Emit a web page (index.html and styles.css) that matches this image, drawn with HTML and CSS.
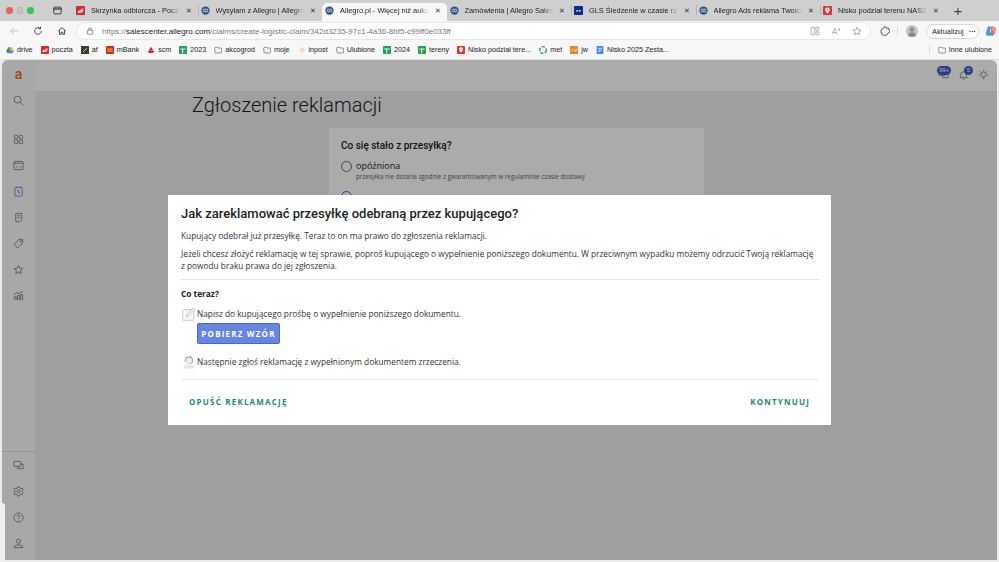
FILE: index.html
```html
<!DOCTYPE html>
<html lang="pl">
<head>
    <meta charset="UTF-8">
    <meta name="viewport" content="width=device-width, initial-scale=1.0">
    <title>Zgłoszenie reklamacji</title>
    <link rel="stylesheet" href="styles.css">
</head>
<body>
    <svg class="defs" width="0" height="0">
        <symbol id="fav-allegro" viewBox="0 0 12 12">
            <circle cx="6" cy="6" r="5.5" fill="#2f5180"/>
            <path d="M3 4.5h6v3H3z" fill="none" stroke="#c5d3e6" stroke-width="1"/>
            <path d="M4 3l4 6M8 3L4 9" stroke="#9fb4d0" stroke-width=".7"/>
        </symbol>
        <symbol id="fav-mail" viewBox="0 0 12 12">
            <rect width="12" height="12" rx="1" fill="#e0252b"/>
            <path d="M2 7l8-4-1 5-6 1.500z" fill="#fff"/>
            <path d="M2 5l4 2 4-3" fill="none" stroke="#e0252b" stroke-width=".8"/>
        </symbol>
        <symbol id="fav-sheet" viewBox="0 0 12 12">
            <rect width="12" height="12" rx="1" fill="#1fa351"/>
            <path d="M2 4.500h8M5.500 4.500V11" stroke="#fff" stroke-width="1.400"/>
        </symbol>
        <symbol id="fav-folder" viewBox="0 0 12 12">
            <path d="M1 3.500q0-1.500 1.500-1.500h2.500l1 1h4q1.500 0 1.500 1.500v4.500q0 1.500-1.500 1.500h-7q-1.500 0-1.500-1.500z" fill="none" stroke="#444" stroke-width=".9"/>
        </symbol>
        <symbol id="fav-pin" viewBox="0 0 12 12">
            <rect width="12" height="12" rx="1" fill="#e0352f"/>
            <path d="M6 2a3 3 0 0 1 3 3c0 2-3 5-3 5S3 7 3 5a3 3 0 0 1 3-3z" fill="#fff"/>
            <circle cx="6" cy="5" r="1" fill="#e0352f"/>
        </symbol>
    </svg>

    <div class="tabstrip">
        <div class="lights">
            <span class="light light-red"></span>
            <span class="light light-grey"></span>
            <span class="light light-green"></span>
        </div>
        <svg class="win-icon" viewBox="0 0 12 12"><rect x="1" y="1.500" width="10" height="9" rx="1.500" fill="none" stroke="#222" stroke-width="1.100"/><path d="M1 4h10" stroke="#222" stroke-width="1.500"/></svg>
        <div class="tab">
            <svg class="fav"><use href="#fav-mail"/></svg>
            <span class="tab-title">Skrzynka odbiorcza - Poczta - Allegro</span>
            <span class="tab-close">✕</span>
        </div>
        <div class="tab">
            <svg class="fav"><use href="#fav-allegro"/></svg>
            <span class="tab-title">Wysyłam z Allegro | Allegro Sales Center</span>
            <span class="tab-close">✕</span>
        </div>
        <div class="tab tab-active">
            <svg class="fav"><use href="#fav-allegro"/></svg>
            <span class="tab-title">Allegro.pl - Więcej niż aukcje. Najlepsze</span>
            <span class="tab-close">✕</span>
        </div>
        <div class="tab">
            <svg class="fav"><use href="#fav-allegro"/></svg>
            <span class="tab-title">Zamówienia | Allegro Sales Center - panel</span>
            <span class="tab-close">✕</span>
        </div>
        <div class="tab">
            <svg class="fav" viewBox="0 0 12 12"><rect width="12" height="12" rx="1" fill="#0b2a8f"/><path d="M3 6.500h2.500M6.500 6.500H9" stroke="#fff" stroke-width="1.500"/></svg>
            <span class="tab-title">GLS Śledzenie w czasie rzeczywistym</span>
            <span class="tab-close">✕</span>
        </div>
        <div class="tab">
            <svg class="fav"><use href="#fav-allegro"/></svg>
            <span class="tab-title">Allegro Ads reklama Twoich ofert na</span>
            <span class="tab-close">✕</span>
        </div>
        <div class="tab">
            <svg class="fav"><use href="#fav-pin"/></svg>
            <span class="tab-title">Nisko podział terenu NASZ – Moje Mapy</span>
            <span class="tab-close">✕</span>
        </div>
        <span class="new-tab">+</span>
    </div>

    <div class="toolbar">
        <div class="nav-buttons">
            <svg class="tool-icon" viewBox="0 0 12 12"><path d="M11 6H2M6 2L2 6l4 4" fill="none" stroke="#bbb" stroke-width="1"/></svg>
            <svg class="tool-icon" viewBox="0 0 12 12"><path d="M10 6a4 4 0 1 1-1.300-3M9 .8V3.300H6.500" fill="none" stroke="#333" stroke-width="1"/></svg>
            <svg class="tool-icon" viewBox="0 0 12 12"><path d="M1.500 6L6 2l4.500 4M3 5v5h2V7.500h2V10h2V5" fill="none" stroke="#333" stroke-width="1"/></svg>
        </div>
        <div class="address">
            <svg class="lock" viewBox="0 0 10 10"><rect x="1.500" y="4" width="7" height="5" rx="1" fill="none" stroke="#555" stroke-width=".8"/><path d="M3.200 4V2.800a1.800 1.800 0 0 1 3.600 0V4" fill="none" stroke="#555" stroke-width=".8"/></svg>
            <span class="url">https://<b>salescenter.allegro.com</b>/claims/create-logistic-claim/342d3235-97c1-4a36-8bf5-c99ff0e033ff</span>
            <div class="address-icons">
                <svg class="tool-icon" viewBox="0 0 12 12"><path d="M1.500 1.500h3.500v9H1.500zM7 1.500h3.500v3.500H7zM7 7h3.500v3.500H7z" fill="none" stroke="#999" stroke-width=".9"/></svg>
                <svg class="tool-icon" viewBox="0 0 12 12"><path d="M1.500 10L4.500 2.500 7.500 10M2.500 7.800h4M8.500 2.500l1.200 3 1-2.200" fill="none" stroke="#999" stroke-width=".9"/></svg>
                <svg class="tool-icon" viewBox="0 0 12 12"><path d="M6 1.500l1.400 3 3.300.400-2.400 2.200.6 3.300L6 8.800l-2.900 1.600.6-3.300-2.400-2.200 3.300-.400z" fill="none" stroke="#888" stroke-width=".9"/></svg>
            </div>
        </div>
        <svg class="tool-icon ext" viewBox="0 0 12 12"><path d="M10 4V2.500H7.500a1.500 1.500 0 0 0-3 0A4.500 4.500 0 1 0 10 8a1.500 1.500 0 0 0 0-4z" fill="none" stroke="#333" stroke-width="1"/></svg>
        <span class="tool-sep"></span>
        <svg class="avatar" viewBox="0 0 12 12"><circle cx="6" cy="6" r="6" fill="#c4c4c4"/><circle cx="6" cy="4.500" r="2.200" fill="#8a8a8a"/><path d="M2 11c.5-3 2-3.800 4-3.800s3.500.800 4 3.800q-4 2-8 0z" fill="#8a8a8a"/></svg>
        <div class="update-pill">Aktualizuj <span class="dots">···</span></div>
        <svg class="copilot" viewBox="0 0 12 12"><path d="M3 1.500h3L5 6 4 10.500H2.500Q.5 10 1 7.500z" fill="#3b9be8"/><path d="M6 1.500h3q2 .5 2 3L9.500 9 8 10.500H4.500L6 6z" fill="#e85fa8"/><path d="M8 1.500l2.500 2L9 7 7 4z" fill="#f4b13d"/><path d="M2 10.500l3-4 3 4z" fill="#35b36c"/></svg>
    </div>

    <div class="bookmarks">
        <div class="bm"><svg class="fav fav-small" viewBox="0 0 12 12"><path d="M4 1.500h4l3.500 6-2 3.500h-7L.5 7.500z" fill="#4285f4"/><path d="M4 1.500h4l3.500 6h-4z" fill="#fbbc05"/><path d="M.5 7.500L4 1.500l2 3.500-3.500 6z" fill="#1fa351"/></svg>drive</div>
        <div class="bm"><svg class="fav fav-small"><use href="#fav-mail"/></svg>poczta</div>
        <div class="bm"><svg class="fav fav-small" viewBox="0 0 12 12"><rect width="12" height="12" fill="#3c3c34"/><path d="M3 9L9 3" stroke="#c6c86a" stroke-width="1.500"/></svg>af</div>
        <div class="bm"><svg class="fav fav-small" viewBox="0 0 12 12"><rect width="12" height="12" rx="1" fill="#cc2c22"/><path d="M3 9V4h2v5M7 9V4h2v5" stroke="#f4c430" fill="none"/></svg>mBank</div>
        <div class="bm"><svg class="fav fav-small" viewBox="0 0 12 12"><path d="M6 1L2.500 7h7zM1 7.500h10L9 10.500H3z" fill="#d9232d"/></svg>scm</div>
        <div class="bm"><svg class="fav fav-small"><use href="#fav-sheet"/></svg>2023</div>
        <div class="bm"><svg class="fav fav-small"><use href="#fav-folder"/></svg>akcogrod</div>
        <div class="bm"><svg class="fav fav-small"><use href="#fav-folder"/></svg>moje</div>
        <div class="bm"><svg class="fav fav-small" viewBox="0 0 12 12"><path d="M6 1v10M1.500 6h9M3 3l6 6M9 3l-6 6" stroke="#f3d36a" stroke-width="1"/></svg>inpost</div>
        <div class="bm"><svg class="fav fav-small"><use href="#fav-folder"/></svg>Ulubione</div>
        <div class="bm"><svg class="fav fav-small"><use href="#fav-sheet"/></svg>2024</div>
        <div class="bm"><svg class="fav fav-small"><use href="#fav-sheet"/></svg>tereny</div>
        <div class="bm"><svg class="fav fav-small"><use href="#fav-pin"/></svg>Nisko podział tere...</div>
        <div class="bm"><svg class="fav fav-small" viewBox="0 0 12 12"><circle cx="6" cy="6" r="5" fill="none" stroke="#2f8f7d" stroke-width="2" stroke-dasharray="5 2"/></svg>met</div>
        <div class="bm"><svg class="fav fav-small" viewBox="0 0 12 12"><rect width="12" height="12" fill="#e8872c"/><path d="M3 4v4M6 4l1 4 1-2 1 2 1-4" stroke="#fff" fill="none" stroke-width=".7"/></svg>jw</div>
        <div class="bm"><svg class="fav fav-small" viewBox="0 0 12 12"><rect x="1" width="10" height="12" rx="1" fill="#4285f4"/><path d="M3 3.500h6M3 6h6M3 8.500h4" stroke="#fff"/></svg>Nisko 2025 Zesta...</div>
        <div class="bm bm-other"><svg class="fav fav-small"><use href="#fav-folder"/></svg>Inne ulubione</div>
    </div>

    <div class="window">
        <aside class="sidebar">
            <div class="side-top">
                <div class="side-cell side-logo">a</div>
                <div class="side-cell"><svg class="side-icon" viewBox="0 0 12 12"><circle cx="5" cy="5" r="3.800"/><path d="M8 8l3.200 3.200"/></svg></div>
                <div class="side-cell side-gap"><svg class="side-icon" viewBox="0 0 12 12"><rect x="1.500" y="1.500" width="3.800" height="3.800" rx="1"/><rect x="6.700" y="1.500" width="3.800" height="3.800" rx="1"/><rect x="1.500" y="6.700" width="3.800" height="3.800" rx="1"/><rect x="6.700" y="6.700" width="3.800" height="3.800" rx="1"/></svg></div>
                <div class="side-cell"><svg class="side-icon" viewBox="0 0 12 12"><rect x="1" y="1.500" width="10" height="9" rx="1"/><path d="M1 3.500h10M3 7.500h2M7 7.500h2"/></svg></div>
                <div class="side-cell"><svg class="side-icon side-icon-on" viewBox="0 0 12 12"><rect x="2" y="1.500" width="8" height="9.500" rx=".8"/><path d="M4 .8v1.500M8 .8v1.500M4.500 5h1.500v2.500h1.500"/></svg></div>
                <div class="side-cell"><svg class="side-icon" viewBox="0 0 12 12"><path d="M3 1.500h6.500v7L7.500 10.500H3zM5 4h2.500M5 6h2.500"/></svg></div>
                <div class="side-cell"><svg class="side-icon" viewBox="0 0 12 12"><path d="M6.500 1.500h4v4l-5.500 5.500-4-4z"/><circle cx="8.500" cy="3.500" r=".7"/></svg></div>
                <div class="side-cell"><svg class="side-icon" viewBox="0 0 12 12"><path d="M6 1.500l1.400 3 3.300.400-2.400 2.200.6 3.300L6 8.800l-2.900 1.600.6-3.300-2.400-2.200 3.300-.400z"/></svg></div>
                <div class="side-cell"><svg class="side-icon" viewBox="0 0 12 12"><path d="M1.500 11V7.500h2V11M5 11V6h2v5M8.500 11V5h2v6M1 5l3-2 2.500 1L10.500 1.500"/></svg></div>
            </div>
            <div class="side-bottom">
                <div class="side-cell"><svg class="side-icon" viewBox="0 0 12 12"><rect x="1" y="1.500" width="7.500" height="5.500" rx=".8"/><path d="M8.500 4.500h2.500v5H5V7"/></svg></div>
                <div class="side-cell"><svg class="side-icon" viewBox="0 0 12 12"><path d="M5 1h2l.4 1.500 1.400.6 1.300-.7 1 1.700-1.100 1 .1 1.500 1 1-1 1.700-1.400-.5-1.200.8L7 11H5l-.4-1.400-1.300-.7-1.400.5-1-1.700 1.100-1V5.200l-1.100-1 1-1.700 1.400.6 1.200-.7z"/><circle cx="6" cy="6" r="1.600"/></svg></div>
                <div class="side-cell"><svg class="side-icon" viewBox="0 0 12 12"><circle cx="6" cy="6" r="5"/><path d="M4.500 4.800a1.500 1.500 0 1 1 2.200 1.300c-.5.300-.7.600-.7 1.100M6 8.500v.6"/></svg></div>
                <div class="side-cell"><svg class="side-icon" viewBox="0 0 12 12"><circle cx="6" cy="3.500" r="2.200"/><path d="M1.500 10.500v-1.500l3-1.500h3l3 1.500v1.500z"/></svg></div>
            </div>
        </aside>

        <div class="main">
            <header class="topbar">
                <div class="top-icon">
                    <svg class="side-icon" viewBox="0 0 12 12"><rect x="1" y="1.500" width="7.500" height="5.500" rx=".8"/><path d="M8.500 4.500h2.500v5H5V7"/></svg>
                    <span class="badge badge-wide">99+</span>
                </div>
                <div class="top-icon">
                    <svg class="side-icon" viewBox="0 0 12 12"><path d="M2 9.500c1-1 1-2 1-3.500a3 3 0 0 1 6 0c0 1.500 0 2.500 1 3.500zM5 11h2"/></svg>
                    <span class="badge">5</span>
                </div>
                <div class="top-icon">
                    <svg class="side-icon" viewBox="0 0 12 12"><circle cx="6" cy="6" r="2.800"/><path d="M6 .8v1.200M1.500 2.500l1 1M10.500 2.500l-1 1M.8 6.500H2M10 6.500h1.200M5 10.500h2"/></svg>
                </div>
            </header>
            <h1 class="page-title">Zgłoszenie reklamacji</h1>
            <section class="claim-panel">
                <h2 class="claim-heading">Co się stało z przesyłką?</h2>
                <div class="claim-option">
                    <span class="radio"></span>
                    <div>
                        <div class="option-label">opóźniona</div>
                        <div class="option-hint">przesyłka nie dotarła zgodnie z gwarantowanym w regulaminie czasie dostawy</div>
                    </div>
                </div>
                <div class="claim-option">
                    <span class="radio radio-on"></span>
                </div>
            </section>
        </div>

        <div class="overlay">
            <div class="modal">
                <h2 class="modal-title">Jak zareklamować przesyłkę odebraną przez kupującego?</h2>
                <p class="modal-text">Kupujący odebrał już przesyłkę. Teraz to on ma prawo do zgłoszenia reklamacji.</p>
                <p class="modal-text">Jeżeli chcesz złożyć reklamację w tej sprawie, poproś kupującego o wypełnienie poniższego dokumentu. W przeciwnym wypadku możemy odrzucić Twoją reklamację z powodu braku prawa do jej zgłoszenia.</p>
                <hr class="modal-line">
                <h3 class="modal-sub">Co teraz?</h3>
                <div class="step">
                    <svg class="step-icon" viewBox="0 0 14 14"><path d="M10 2.500H1.500q-.8 0-.8.8v9.500q0 .6.8.6h9.500q.8 0 .8-.8V5" fill="#f4f6f7" stroke="#b5bcc2" stroke-width=".7"/><path d="M4.500 9.500l.6-2L11.500 1l1.500 1.500-6.500 6.400z" fill="#fff" stroke="#9aa3aa" stroke-width=".7"/></svg>
                    <span>Napisz do kupującego prośbę o wypełnienie poniższego dokumentu.</span>
                </div>
                <a class="download-btn">POBIERZ WZÓR</a>
                <div class="step step-second">
                    <svg class="step-icon step-icon-person" viewBox="0 0 15 15"><path d="M1 14.500c.3-3 2-3.800 4-4.300h5c2 .5 3.700 1.300 4 4.300z" fill="#e3e9ee"/><circle cx="7.500" cy="5.500" r="3.600" fill="#f2efe9" stroke="#a9b7c4" stroke-width=".5"/><path d="M3.500 6a4 4 0 0 1 8 0" fill="none" stroke="#8aa5c0" stroke-width="1.100"/><path d="M3.500 5.500v2M11.500 5.500v2M11.500 7.500q0 1.500-2.500 1.800" fill="none" stroke="#6f8fb0" stroke-width=".7"/></svg>
                    <span>Następnie zgłoś reklamację z wypełnionym dokumentem zrzeczenia.</span>
                </div>
                <hr class="modal-line modal-line-low">
                <div class="modal-actions">
                    <a class="link-btn">OPUŚĆ REKLAMACJĘ</a>
                    <a class="link-btn">KONTYNUUJ</a>
                </div>
            </div>
        </div>
    </div>
    <div class="corner-tab"></div>
</body>
</html>
```

FILE: styles.css
```css
html, body {
    height: 100%;
}
body {
    margin: 0;
    width: 999px;
    height: 562px;
    overflow: hidden;
    display: flex;
    flex-direction: column;
    position: relative;
    background-color: #ececec;
    font-family: "Liberation Sans", Arial, sans-serif;
    color: #222;
}
.defs {
    position: absolute;
}

/* browser chrome */
.tabstrip {
    height: 21px;
    display: flex;
    align-items: center;
    background-color: #cfcfcf;
    flex-shrink: 0;
}
.lights {
    display: flex;
    gap: 4px;
    margin-left: 6px;
}
.light {
    width: 6.500px;
    height: 6.500px;
    border-radius: 50%;
}
.light-red {
    background-color: #ee5f57;
}
.light-grey {
    background-color: #c4c4c4;
    box-shadow: inset 0 0 0 .5px #aaa;
}
.light-green {
    background-color: #36c84a;
}
.win-icon {
    width: 9px;
    height: 9px;
    margin-left: 19.500px;
    margin-right: 11px;
}
.tab {
    width: 124.500px;
    height: 18px;
    margin-top: 3px;
    box-sizing: border-box;
    padding: 0 5px 3px 3px;
    display: flex;
    align-items: center;
    gap: 6px;
    font-size: 7.400px;
    border-right: 1px solid transparent;
}
.tab:first-of-type {
    border-left: 1px solid #b5b5b5;
}
.tab + .tab {
    background-image: linear-gradient(#b5b5b5, #b5b5b5);
    background-size: 1px 10px;
    background-position: 0 2px;
    background-repeat: no-repeat;
}
.tab-active {
    background: #f7f7f7 !important;
    border-radius: 5px 5px 0 0;
}
.tab-active + .tab {
    background: none;
}
.fav {
    width: 9px;
    height: 9px;
    flex-shrink: 0;
}
.tab-title {
    flex: 1;
    white-space: nowrap;
    overflow: hidden;
    -webkit-mask-image: linear-gradient(to right, #000 88%, transparent);
    mask-image: linear-gradient(to right, #000 88%, transparent);
}
.tab-close {
    font-size: 7px;
    color: #333;
}
.new-tab {
    font-size: 15px;
    line-height: 1;
    font-weight: 300;
    color: #444;
    margin-left: 9px;
}

.toolbar {
    height: 20px;
    display: flex;
    align-items: center;
    background-color: #f7f7f7;
    flex-shrink: 0;
}
.nav-buttons {
    display: flex;
    gap: 14px;
    margin-left: 9px;
}
.tool-icon {
    width: 10px;
    height: 10px;
    flex-shrink: 0;
}
.address {
    width: 793px;
    height: 16px;
    box-sizing: border-box;
    margin-left: 10px;
    padding: 0 8px 0 9px;
    display: flex;
    align-items: center;
    background-color: #fff;
    border-radius: 9px;
    box-shadow: 0 0 0 1px #e6e6e6;
}
.lock {
    width: 8px;
    height: 8px;
}
.url {
    margin-left: 8px;
    font-size: 8px;
    color: #777;
    white-space: nowrap;
}
.url b {
    font-weight: normal;
    color: #222;
}
.address-icons {
    margin-left: auto;
    display: flex;
    gap: 11px;
}
.ext {
    margin-left: 10px;
}
.tool-sep {
    width: 1px;
    height: 10px;
    margin-left: 7px;
    background-color: #ddd;
}
.avatar {
    width: 12px;
    height: 12px;
    margin-left: 8px;
}
.update-pill {
    width: 53px;
    height: 15px;
    box-sizing: border-box;
    margin-left: 8px;
    padding-left: 5px;
    font-size: 7.400px;
    line-height: 13px;
    background-color: #fff;
    border: 1px solid #d8d8d8;
    border-radius: 8px;
    white-space: nowrap;
}
.dots {
    margin-left: 3px;
    font-weight: bold;
}
.copilot {
    width: 12px;
    height: 12px;
    margin-left: 6px;
}

.bookmarks {
    height: 19px;
    box-sizing: border-box;
    padding: 0 7px 1px 6px;
    display: flex;
    align-items: center;
    gap: 8px;
    background-color: #f7f7f7;
    border-bottom: 1px solid #dedede;
    font-size: 7.200px;
    flex-shrink: 0;
}
.bm {
    display: flex;
    align-items: center;
    gap: 3px;
    white-space: nowrap;
}
.fav-small {
    width: 8px;
    height: 8px;
}
.bm-other {
    margin-left: auto;
    padding-left: 8px;
    border-left: 1px solid #ddd;
}

/* page behind the dialog */
.window {
    position: relative;
    flex: 1;
    margin: 0 2px 2px;
    display: flex;
    background-color: #eee;
    border-radius: 6px 6px 0 0;
    overflow: hidden;
}
.sidebar {
    width: 33px;
    display: flex;
    flex-direction: column;
    justify-content: space-between;
    background-color: #fbfbfb;
    flex-shrink: 0;
}
.side-top {
    padding-top: 1px;
}
.side-bottom {
    padding-bottom: 4px;
    border-top: 1px solid #ddd;
}
.side-cell {
    height: 26px;
    display: flex;
    align-items: center;
    justify-content: center;
}
.side-gap {
    margin-top: 13px;
}
.side-logo {
    font-family: Roboto, sans-serif;
    font-size: 14px;
    font-weight: 500;
    color: #ff5a00;
}
.side-icon {
    width: 11px;
    height: 11px;
    fill: none;
    stroke: #666;
    stroke-width: .8;
}
.side-icon-on {
    stroke: #4a66d0;
}
.main {
    flex: 1;
    min-width: 0;
}
.topbar {
    height: 31px;
    box-sizing: border-box;
    padding: 7px 8px 0 0;
    display: flex;
    justify-content: flex-end;
    gap: 8px;
    background-color: #fff;
}
.top-icon {
    position: relative;
    width: 12px;
    height: 14px;
    display: flex;
    align-items: center;
    justify-content: center;
}
.badge {
    position: absolute;
    top: -1px;
    right: -4px;
    min-width: 9px;
    height: 9px;
    border-radius: 5px;
    font-size: 6px;
    line-height: 9px;
    text-align: center;
    color: #fff;
    background-color: #3d5dc9;
}
.badge-wide {
    width: 14px;
    right: -2px;
}
.page-title {
    margin: 2px 0 0 157px;
    font-family: Roboto, sans-serif;
    font-size: 20px;
    font-weight: 300;
    line-height: 24px;
    color: #222;
}
.claim-panel {
    width: 375px;
    height: 90px;
    box-sizing: border-box;
    margin: 11px 0 0 294px;
    padding: 12px;
    background-color: #fff;
}
.claim-heading {
    margin: 0 0 8px;
    font-family: Roboto, sans-serif;
    font-size: 10px;
    line-height: 12px;
    font-weight: 500;
}
.claim-option {
    display: flex;
    gap: 4px;
    margin-bottom: 8px;
}
.radio {
    width: 9px;
    height: 9px;
    margin-top: 1px;
    border: 1px solid #666;
    border-radius: 50%;
}
.radio-on {
    border-color: #3d5dc9;
}
.option-label {
    font-family: "Open Sans", sans-serif;
    font-size: 9px;
    line-height: 12px;
}
.option-hint {
    font-family: "Open Sans", sans-serif;
    font-size: 6.300px;
    line-height: 10px;
    color: #666;
}

/* dialog */
.overlay {
    position: absolute;
    inset: 0;
    display: flex;
    align-items: center;
    justify-content: center;
    background-color: rgba(0, 0, 0, .33);
}
.modal {
    width: 663px;
    height: 230px;
    box-sizing: border-box;
    padding: 11px 12px 0 13px;
    background-color: #fff;
    font-family: "Open Sans", sans-serif;
    font-size: 8.300px;
    color: #333;
}
.modal-title {
    margin: 0 0 8px;
    font-family: Roboto, sans-serif;
    font-size: 13px;
    line-height: 16px;
    font-weight: 500;
    color: #222;
}
.modal-text {
    margin: 0 0 6px;
    line-height: 12px;
}
.modal-line {
    margin: 7px 0 0;
    border: none;
    border-top: 1px solid #e6e6e6;
}
.modal-sub {
    margin: 8px 0 0;
    font-size: 8.300px;
    line-height: 12px;
    font-weight: 700;
    color: #222;
}
.step {
    margin-top: 7px;
    display: flex;
    align-items: center;
    gap: 1px;
    line-height: 14px;
}
.step-icon {
    width: 14px;
    height: 14px;
    flex-shrink: 0;
    margin-left: 1px;
}
.download-btn {
    display: block;
    width: 83px;
    height: 21px;
    box-sizing: border-box;
    margin: 2px 0 0 16px;
    font-size: 8px;
    font-weight: 700;
    line-height: 19px;
    letter-spacing: 1.200px;
    text-align: center;
    color: #fff;
    background-color: #6685e4;
    border: 1px dotted #2f4fa8;
    border-radius: 2px;
}
.step-second {
    margin-top: 11px;
}
.modal-line-low {
    margin-top: 10px;
}
.modal-actions {
    margin-top: 16px;
    padding: 0 9px 0 8px;
    display: flex;
    justify-content: space-between;
}
.link-btn {
    font-size: 8px;
    font-weight: 700;
    line-height: 12px;
    letter-spacing: 1.200px;
    color: #1d8a73;
}

.corner-tab {
    position: absolute;
    left: 0;
    top: 503px;
    width: 5px;
    height: 59px;
    background-color: #f0f0ee;
    border-radius: 0 3px 0 0;
}
```
